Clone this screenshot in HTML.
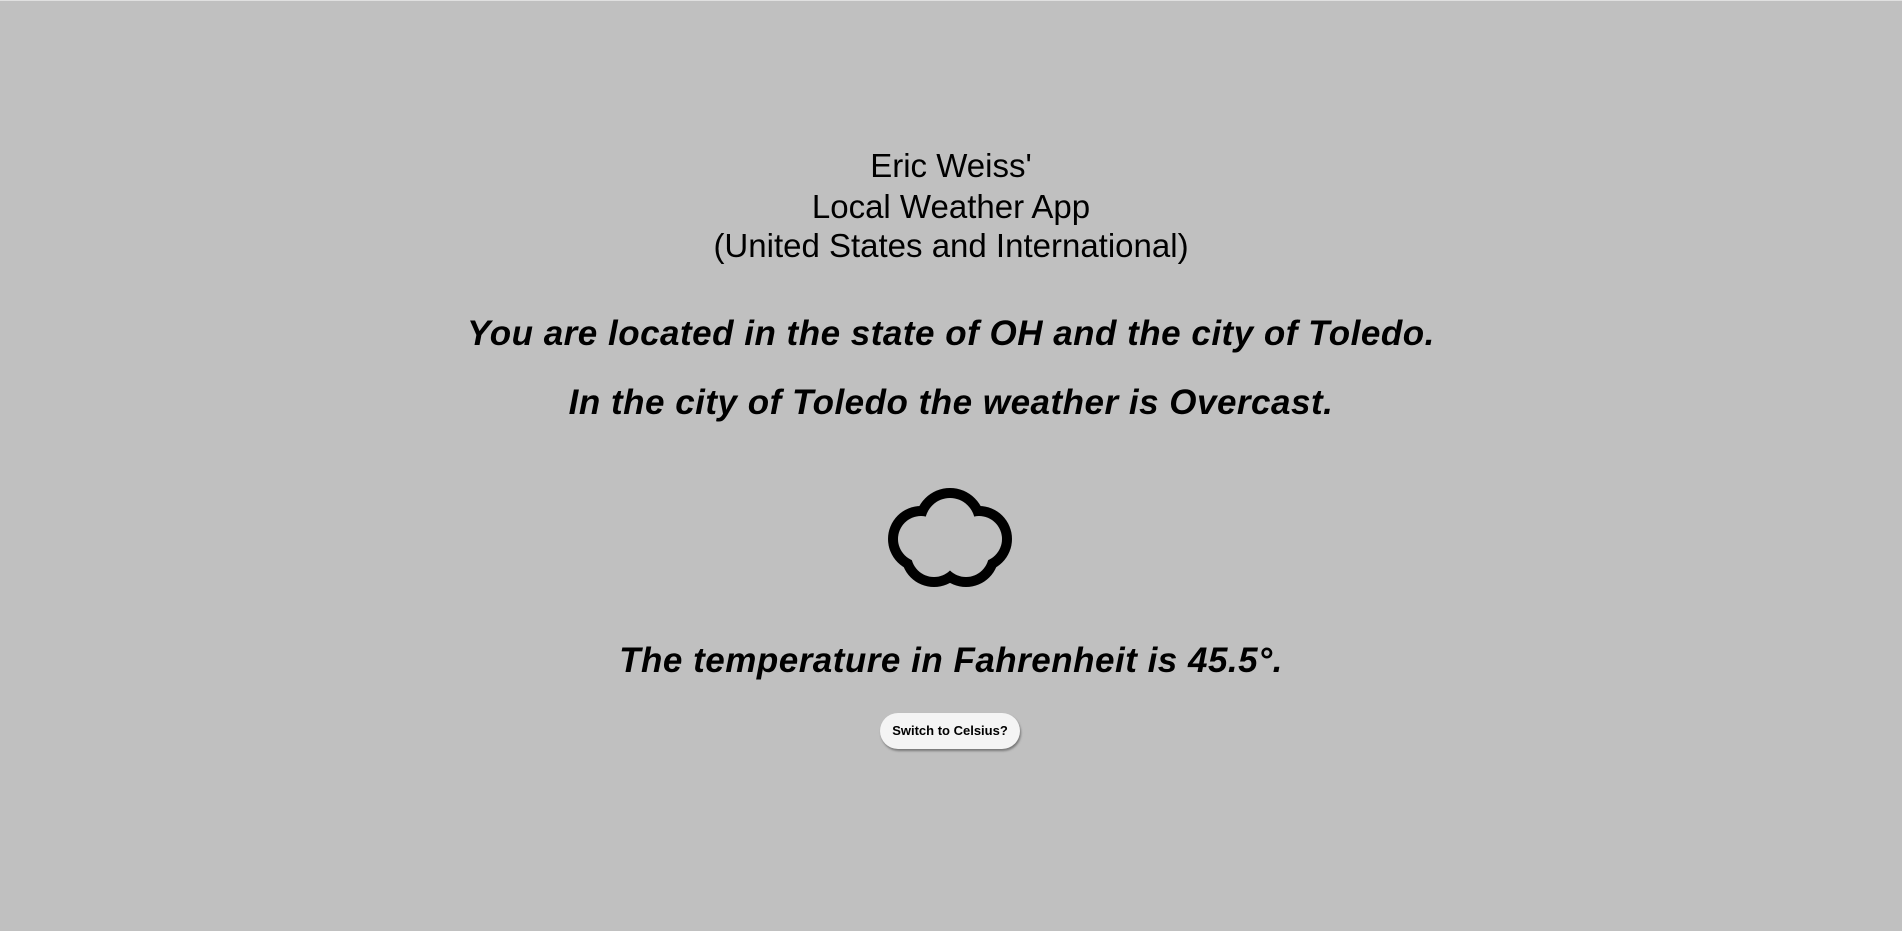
<!DOCTYPE html>
<html><head><meta charset="utf-8"><style>
html,body{margin:0;padding:0;}
body{width:1902px;height:930px;background:#c0c0c0;position:relative;overflow:hidden;font-family:"Liberation Sans",sans-serif;color:#000;border-top:1px solid #e0e0e0;box-sizing:border-box}
.t{position:absolute;left:0;width:1902px;text-align:center;white-space:nowrap}
.h{font-size:33px;line-height:41px}
.b{font-size:35px;font-weight:bold;font-style:italic;letter-spacing:0.5px}
.btn{position:absolute;left:880px;top:712px;width:140px;height:36px;border-radius:18px;background:#f4f4f4;box-shadow:1px 2px 2px #777;font-size:13px;font-weight:bold;text-align:center;line-height:36px}
</style></head><body>
<div class="t h" style="top:144px">Eric Weiss'</div>
<div class="t h" style="top:185px">Local Weather App</div>
<div class="t h" style="top:224px">(United States and International)</div>
<div class="t b" style="top:313px">You are located in the state of OH and the city of Toledo.</div>
<div class="t b" style="top:382px">In the city of Toledo the weather is Overcast.</div>
<svg style="position:absolute;left:0;top:0" width="1902" height="930">
<g fill="#000">
<circle cx="950" cy="522" r="35"/><circle cx="921" cy="538" r="33"/><circle cx="979" cy="538" r="33"/>
<circle cx="934" cy="553" r="33"/><circle cx="966" cy="553" r="33"/></g>
<g fill="#c0c0c0">
<circle cx="950" cy="522" r="25"/><circle cx="921" cy="538" r="23"/><circle cx="979" cy="538" r="23"/>
<circle cx="934" cy="553" r="23"/><circle cx="966" cy="553" r="23"/></g>
</svg>
<div class="t b" style="top:640px">The temperature in Fahrenheit is 45.5°.</div>
<div class="btn">Switch to Celsius?</div>
</body></html>
